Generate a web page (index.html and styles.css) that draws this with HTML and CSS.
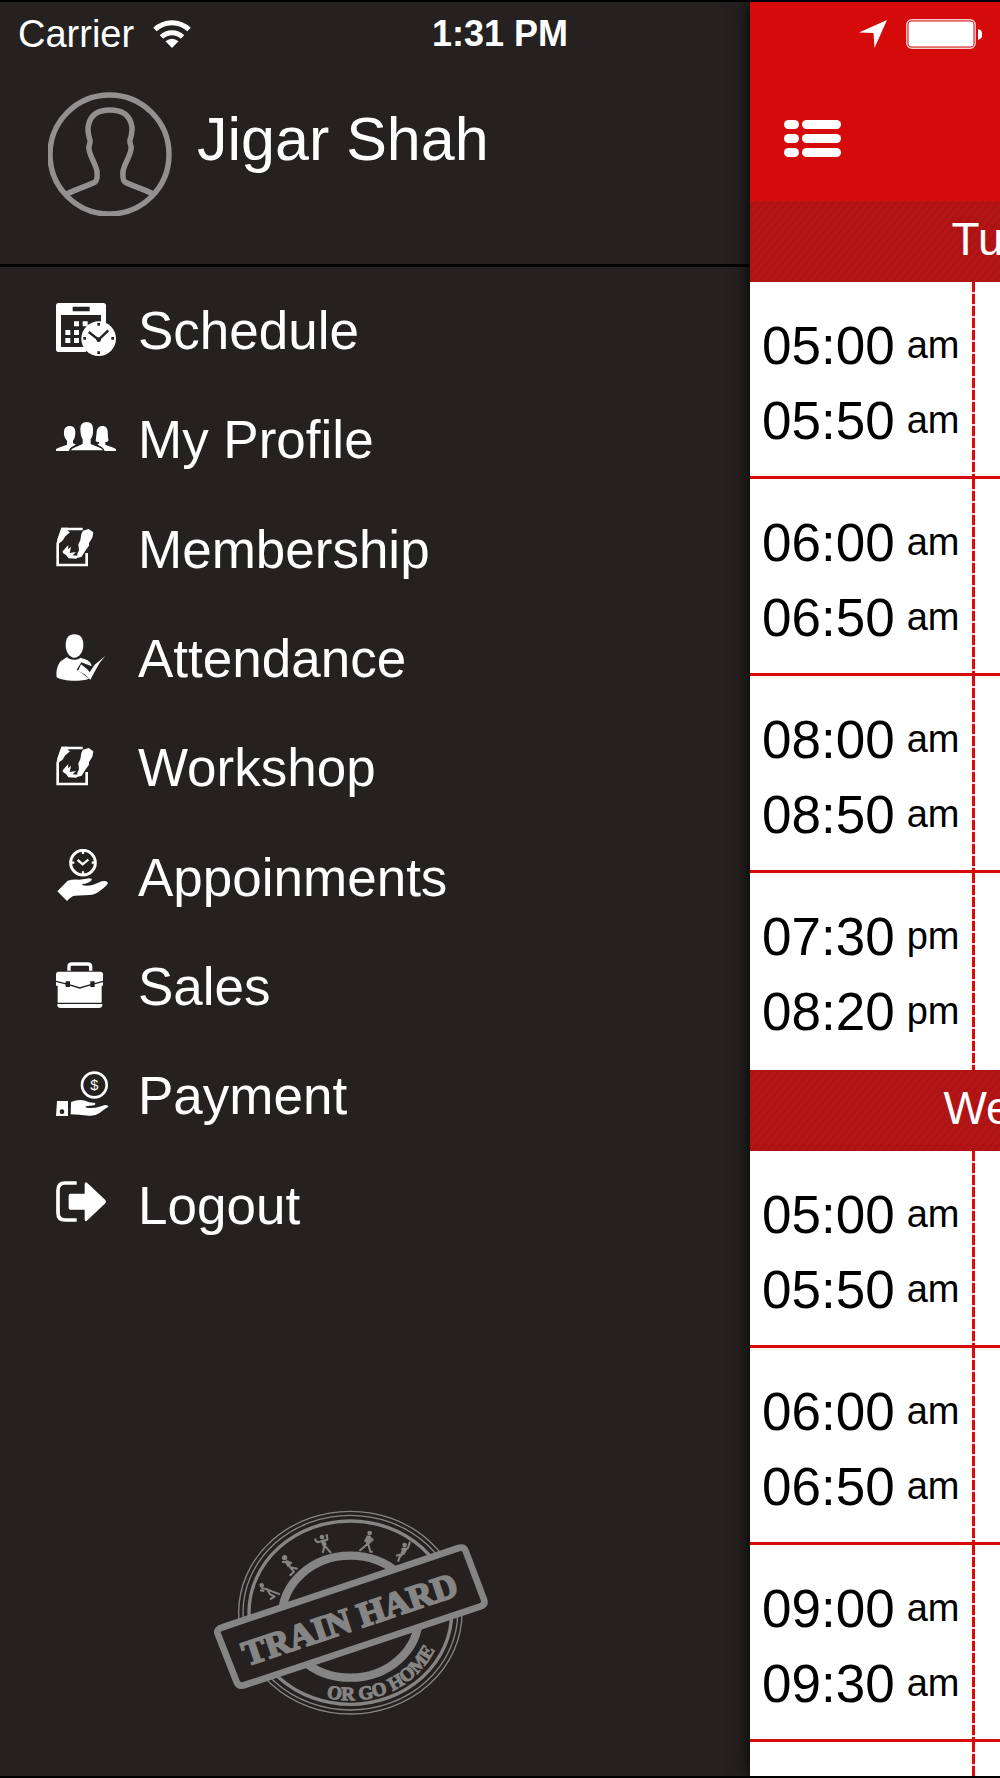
FILE: index.html
```html
<!DOCTYPE html>
<html lang="en">
<head>
    <meta charset="UTF-8">
    <meta name="viewport" content="width=device-width, initial-scale=1.0">
    <title>Train Hard</title>
    <link rel="stylesheet" href="styles.css">
</head>
<body>
    <div class="screen">
        <!-- Status bar -->
        <div class="status-bar">
            <div class="status-left">
                <span>Carrier</span>
                <svg class="wifi" viewBox="0 0 38 28" aria-hidden="true">
                    <path d="M2 9.500A24.500 24.500 0 0 1 36 9.500M8.500 17A15 15 0 0 1 29.500 17" fill="none" stroke="#fff" stroke-width="5"/>
                    <path d="M19 28L12.500 21.300Q19 16 25.500 21.300Z" fill="#fff"/>
                </svg>
            </div>
            <strong class="clock">1:31 PM</strong>
            <div class="status-right">
                <svg class="location" viewBox="0 0 28 28" aria-hidden="true">
                    <path d="M28 0L15.500 28L14.500 13L0 12.500Z" fill="#fff"/>
                </svg>
                <svg class="battery" viewBox="0 0 76 30" aria-hidden="true">
                    <rect x="0.800" y="0.800" width="68.400" height="28.400" rx="5" fill="none" stroke="#fff" stroke-opacity="0.800" stroke-width="1.400"/>
                    <rect x="2.500" y="2.500" width="65" height="25" rx="3" fill="#fff"/>
                    <path d="M72 10Q76.500 11 76.500 15.500T72 21Z" fill="#fff"/>
                </svg>
            </div>
        </div>

        <!-- Side menu -->
        <div class="sidebar">
            <div class="profile">
                <svg class="avatar" viewBox="0 0 124 124" aria-hidden="true">
                    <g fill="none" stroke="#929090" stroke-width="5.500">
                        <circle cx="61.500" cy="62.500" r="59.500"/>
                        <path d="M19 102C30 96 40 94 47 90C50 88 49 83 49 79C47 70 42 65 41 57C40 53 43 52 42 48C40 42 39 36 41 31C44 21 52 18 62 18S80 21 83 31C85 36 84 42 82 48C81 52 84 53 83 57C82 65 77 70 75 79C75 83 74 88 77 90C84 94 94 96 105 102"/>
                    </g>
                </svg>
                <h1 class="user-name">Jigar Shah</h1>
            </div>

            <ul class="menu">
                <li><a href="#schedule">
                    <svg class="icon" viewBox="0 0 180 168" aria-hidden="true">
                        <path fill-rule="evenodd" d="M8 0H142Q150 0 150 8V60H135V36H15V132H90V147H8Q0 147 0 139V8Q0 0 8 0ZM50 11V25H101V11Z"/>
                        <path d="M54 55H69V70H54ZM80 55H95V70H80ZM28 81H43V96H28ZM54 81H69V96H54ZM28 105H43V120H28ZM54 105H69V120H54Z"/>
                        <circle cx="128" cy="107" r="52"/>
                        <path class="cut-line" stroke-width="7" d="M98 87L128 110L157 82"/>
                        <circle class="cut" cx="128" cy="110" r="7"/>
                        <path class="cut" d="M124 60H132V68H124ZM124 145H132V153H124ZM82 102H90V110H82ZM166 102H174V110H166Z"/>
                    </svg>
                    <span>Schedule</span></a></li>
                <li><a href="#my-profile">
                    <svg class="icon" viewBox="0 0 180 168" aria-hidden="true">
                        <path d="M0 117V111C10 105 23 102 33 98V86C25 79 23 68 24 58C25 46 33 42 42 42S58 48 58 60C58 72 56 80 51 86V94L60 98C48 103 42 107 40 117Z"/>
                        <path d="M180 117V111C171 105 157 102 148 98V90C154 91 158 88 157 82C155 74 156 67 155 58C154 46 148 42 139 42S123 48 122 60C121 72 120 78 119 86C121 90 126 91 129 90V94L124 98C135 103 143 107 145 117Z"/>
                        <path class="outline" d="M41 117C43 105 64 101 78 95V82C73 75 71 62 71 49C72 34 80 28 92 28S112 34 113 49C114 62 111 75 106 82V95C122 101 142 105 144 117Z"/>
                    </svg>
                    <span>My Profile</span></a></li>
                <li><a href="#membership">
                    <svg class="icon" viewBox="0 0 180 168" aria-hidden="true">
                        <g id="signing">
                            <path fill="none" stroke="#fff" stroke-width="8" d="M80 24H20L5 68V132H92V96"/>
                            <path d="M16 20H36Q30 27 42 34L28 46L19 60L4 70V55Z"/>
                            <path d="M81 29L98 24L112 34L109 50L99 66V74L89 88L77 107L63 111L64 98L69 88L67 70L73 58L76 39Z"/>
                            <path d="M20 91L37 72L36 85L45 77L41 96L60 93L50 103L64 104L62 113L37 112L31 103L21 96Z"/>
                        </g>
                    </svg>
                    <span>Membership</span></a></li>
                <li><a href="#attendance">
                    <svg class="icon" viewBox="0 0 180 168" aria-hidden="true">
                        <path d="M55 10C74 10 82 22 82 42C82 62 70 80 55 80S29 62 29 42C29 22 38 10 55 10Z"/>
                        <path d="M33 78C39 88 65 89 73 80C84 84 98 85 105 98L107 106L76 94L62 116L81 129L99 143C75 153 18 151 2 139C-1 121 5 101 14 91Z"/>
                        <path d="M75 100L94 115L101 124L116 101L149 74L132 94L115 124L103 146L86 130L66 120Z"/>
                    </svg>
                    <span>Attendance</span></a></li>
                <li><a href="#workshop">
                    <svg class="icon" viewBox="0 0 180 168" aria-hidden="true"><use href="#signing"/></svg>
                    <span>Workshop</span></a></li>
                <li><a href="#appoinments">
                    <svg class="icon" viewBox="0 0 180 168" aria-hidden="true">
                        <g fill="none" stroke="#fff">
                            <circle cx="81" cy="41" r="37" stroke-width="9"/>
                            <path stroke-width="7" d="M65 33L80 46L97 32M81 6V15M81 67V76M46 41H55M107 41H116"/>
                        </g>
                        <path d="M4 127L35 95Q52 90 70 92L100 88Q109 88 107 93Q103 101 78 106L80 109Q95 112 112 107L137 97Q153 94 156 102Q152 112 132 125Q119 137 99 138L56 140Q45 142 33 156Z"/>
                    </svg>
                    <span>Appoinments</span></a></li>
                <li><a href="#sales">
                    <svg class="icon" viewBox="0 0 180 168" aria-hidden="true">
                        <path fill="none" stroke="#fff" stroke-width="10" d="M39 35V23Q39 15 48 15H95Q104 15 104 23V35"/>
                        <rect y="38" width="141" height="93" rx="8"/>
                        <path d="M4 135H139V139Q138 147 129 147H14Q5 147 4 139Z"/>
                        <path class="cut-line" stroke-width="4" d="M0 67L36 76L71 87L108 76L142 67"/>
                        <path class="cut" d="M29 67H42V84H29ZM103 67H116V84H103ZM0 80H5V131H0ZM137 80H142V131H137Z"/>
                    </svg>
                    <span>Sales</span></a></li>
                <li><a href="#payment">
                    <svg class="icon" viewBox="0 0 180 168" aria-hidden="true">
                        <circle cx="115" cy="51" r="37" fill="none" stroke="#fff" stroke-width="8"/>
                        <text class="dollar" x="115" y="67" text-anchor="middle">$</text>
                        <path fill-rule="evenodd" d="M3 99H36V144H0ZM18 124A7 7 0 1 0 18 138A7 7 0 1 0 18 124Z"/>
                        <path d="M45 102Q67 93 87 98Q101 105 115 104Q121 106 115 112L88 115L92 119Q112 122 128 117L147 111Q157 112 157 116Q141 126 132 134Q117 145 98 143L70 140L44 139Z"/>
                    </svg>
                    <span>Payment</span></a></li>
                <li><a href="#logout">
                    <svg class="icon" viewBox="0 0 180 168" aria-hidden="true">
                        <path fill="none" stroke="#fff" stroke-width="11" d="M62 18H27Q6 18 6 40V108Q6 129 27 129H62"/>
                        <path d="M43 50H86V20Q88 12 94 18L148 69Q152 74 148 79L94 130Q88 136 86 128V98H43Q38 98 38 92V56Q38 50 43 50Z"/>
                    </svg>
                    <span>Logout</span></a></li>
            </ul>

            <!-- Stamp logo -->
            <svg class="stamp" viewBox="36 28 831 621" role="img" aria-label="Train Hard or Go Home">
                <g fill="none" stroke="#858585">
                    <ellipse cx="451" cy="339" rx="335" ry="304" stroke-width="4"/>
                    <ellipse cx="451" cy="339" rx="322" ry="292" stroke-width="4"/>
                    <ellipse cx="451" cy="339" rx="304" ry="275" stroke-width="10"/>
                    <ellipse cx="451" cy="351" rx="205" ry="183" stroke-width="25"/>
                </g>
                <!-- athletes -->
                <g class="athletes">
                    <circle cx="185" cy="257" r="4"/><path d="M184 265L202 269L216 275L240 284M180 272L193 274M202 270L210 284L224 290L210 299"/>
                    <circle cx="254" cy="174" r="5"/><path d="M258 183L270 203M246 187L260 186L276 190M270 203L293 207M270 203L282 216L269 228"/>
                    <path stroke-width="12" d="M259 184L268 199"/>
                    <circle cx="366" cy="112" r="4"/><path d="M346 122L354 128L368 123L382 120L381 109M368 124L374 138L368 160M374 138L393 160M343 120L349 119M377 108L384 106"/>
                    <path stroke-width="13" d="M368 121L374 138"/>
                    <circle cx="509" cy="100" r="4"/><path d="M505 110L503 132L478 154M504 130L511 156H518M505 111L518 120L509 128M502 113L494 126"/>
                    <path stroke-width="13" d="M506 108L504 132"/>
                    <circle cx="614" cy="136" r="4"/><path d="M630 126L624 145L613 150L606 164L588 168M609 161L598 174L594 186M611 146L604 151"/>
                    <path stroke-width="13" d="M617 145L607 163"/>
                </g>
                <path d="M70 382L776 145Q792 140 797 154L852 300Q857 314 842 320L134 556Q116 562 110 547L53 402Q48 388 70 382Z" fill="#252120" stroke="#858585" stroke-width="20"/>
                <text class="stamp-title" transform="translate(141 499) rotate(-18.500)">TRAIN HARD</text>
                <path id="stampArc" d="M171 339A280 263 0 0 0 731 339" fill="none"/>
                <text class="stamp-note"><textPath href="#stampArc" startOffset="41.500%">OR GO HOME</textPath></text>
            </svg>
        </div>

        <!-- Schedule page, pushed to the right -->
        <div class="schedule">
            <div class="top-bar">
                <button class="menu-button" type="button" aria-label="Menu">
                    <svg viewBox="0 0 57 38" aria-hidden="true">
                        <g fill="#fff">
                            <rect width="15" height="9" rx="4.500"/><rect x="18" width="39" height="9" rx="4.500"/>
                            <rect y="14" width="15" height="9" rx="4.500"/><rect x="18" y="14" width="39" height="9" rx="4.500"/>
                            <rect y="28" width="15" height="9" rx="4.500"/><rect x="18" y="28" width="39" height="9" rx="4.500"/>
                        </g>
                    </svg>
                </button>
            </div>

            <h2 class="day"><span>Tu</span></h2>
            <ul class="slots">
                <li><div class="times"><p>05:00 <small>am</small></p><p>05:50 <small>am</small></p></div></li>
                <li><div class="times"><p>06:00 <small>am</small></p><p>06:50 <small>am</small></p></div></li>
                <li><div class="times"><p>08:00 <small>am</small></p><p>08:50 <small>am</small></p></div></li>
                <li><div class="times"><p>07:30 <small>pm</small></p><p>08:20 <small>pm</small></p></div></li>
            </ul>

            <h2 class="day"><span>We</span></h2>
            <ul class="slots">
                <li><div class="times"><p>05:00 <small>am</small></p><p>05:50 <small>am</small></p></div></li>
                <li><div class="times"><p>06:00 <small>am</small></p><p>06:50 <small>am</small></p></div></li>
                <li><div class="times"><p>09:00 <small>am</small></p><p>09:30 <small>am</small></p></div></li>
                <li><div class="times"></div></li>
            </ul>
        </div>
    </div>
</body>
</html>
```

FILE: styles.css
```css
/* General styling */
* {
    box-sizing: border-box;
}

body {
    margin: 0;
    font-family: "Liberation Sans", Arial, Helvetica, sans-serif;
    background-color: #000;
    color: #fff;
}

h1, h2, p, ul {
    margin: 0;
    padding: 0;
    font-weight: normal;
}

ul {
    list-style-type: none;
}

svg {
    display: block;
    flex-shrink: 0;
}

.screen {
    position: relative;
    display: flex;
    height: 100vh;
    border-top: 2px solid #000;
    border-bottom: 2px solid #000;
    overflow: hidden;
}

/* Status bar */
.status-bar {
    position: absolute;
    top: 0;
    left: 0;
    right: 0;
    z-index: 2;
    display: grid;
    grid-template-columns: 1fr auto 1fr;
    align-items: center;
    height: 64px;
    padding: 0 18px;
    font-size: 38px;
}

.status-left, .status-right {
    display: flex;
    align-items: center;
    gap: 19px;
}

.status-right {
    justify-content: flex-end;
}

.clock {
    font-size: 36px;
}

.wifi {
    width: 38px;
    height: 28px;
}

.location {
    width: 28px;
    height: 28px;
}

.battery {
    width: 76px;
    height: 30px;
}

/* Side menu */
.sidebar {
    flex: 3;
    min-width: 0;
    display: flex;
    flex-direction: column;
    background-color: #252120;
}

.profile {
    display: flex;
    align-items: flex-start;
    gap: 25px;
    padding: 90px 0 48px 48px;
    border-bottom: 3px solid #000;
}

.avatar {
    width: 124px;
    height: 124px;
}

.user-name {
    font-size: 61px;
    line-height: 94px;
}

.menu {
    display: grid;
    grid-auto-rows: 1fr;
    height: 984px;
    margin-top: 9px;
}

.menu a {
    display: flex;
    align-items: center;
    gap: 22px;
    height: 100%;
    padding-left: 56px;
    color: #fff;
    font-size: 53px;
    text-decoration: none;
}

.icon {
    width: 60px;
    height: 56px;
    fill: #fff;
}

.cut {
    fill: #252120;
}

.cut-line {
    fill: none;
    stroke: #252120;
}

.outline {
    stroke: #252120;
    stroke-width: 4px;
}

.dollar {
    font-size: 44px;
}

/* Stamp logo */
.stamp {
    width: 277px;
    height: 207px;
    margin: auto 0 60px 212px;
    fill: #858585;
    font-family: "Liberation Serif", "Times New Roman", serif;
    font-weight: bold;
}

.athletes {
    stroke: #858585;
    stroke-width: 6px;
    stroke-linejoin: round;
}

.athletes path {
    fill: none;
}

.stamp-title {
    font-size: 105px;
    stroke: #858585;
    stroke-width: 6px;
}

.stamp-note {
    font-size: 57px;
    stroke: #858585;
    stroke-width: 3px;
}

/* Schedule */
.schedule {
    flex: 1;
    min-width: 0;
    background-color: #fff;
    box-shadow: 0 0 18px #000;
}

.top-bar {
    height: 199px;
    padding: 118px 34px 0;
    background-color: #d50b0b;
}

.menu-button {
    padding: 0;
    border: none;
    background: none;
    cursor: pointer;
}

.menu-button svg {
    width: 57px;
    height: 38px;
}

.day {
    height: 81px;
    padding-left: 190px;
    overflow: hidden;
    background: repeating-linear-gradient(-50deg, #b51414 0, #b51414 3px, #a31415 5px, #b51414 6px);
    font-size: 46px;
    line-height: 77px;
}

.day span {
    display: block;
    width: 75px;
    text-align: center;
}

.slots li {
    height: 197px;
    border-bottom: 3px solid #d50b0b;
}

.slots li:last-child {
    border-bottom: none;
}

/* Dashed divider on the right side of the times */
.times {
    width: 225px;
    height: 197px;
    padding: 26px 0 0 12px;
    background: repeating-linear-gradient(#d9090c 0, #d9090c 10px, #fbd5d5 10px, #fbd5d5 12px) right / 3px 100% no-repeat;
    color: #000;
}

.times p {
    display: flex;
    align-items: center;
    gap: 12px;
    font-size: 53px;
    line-height: 75px;
}

.times small {
    font-size: 38px;
}
```
